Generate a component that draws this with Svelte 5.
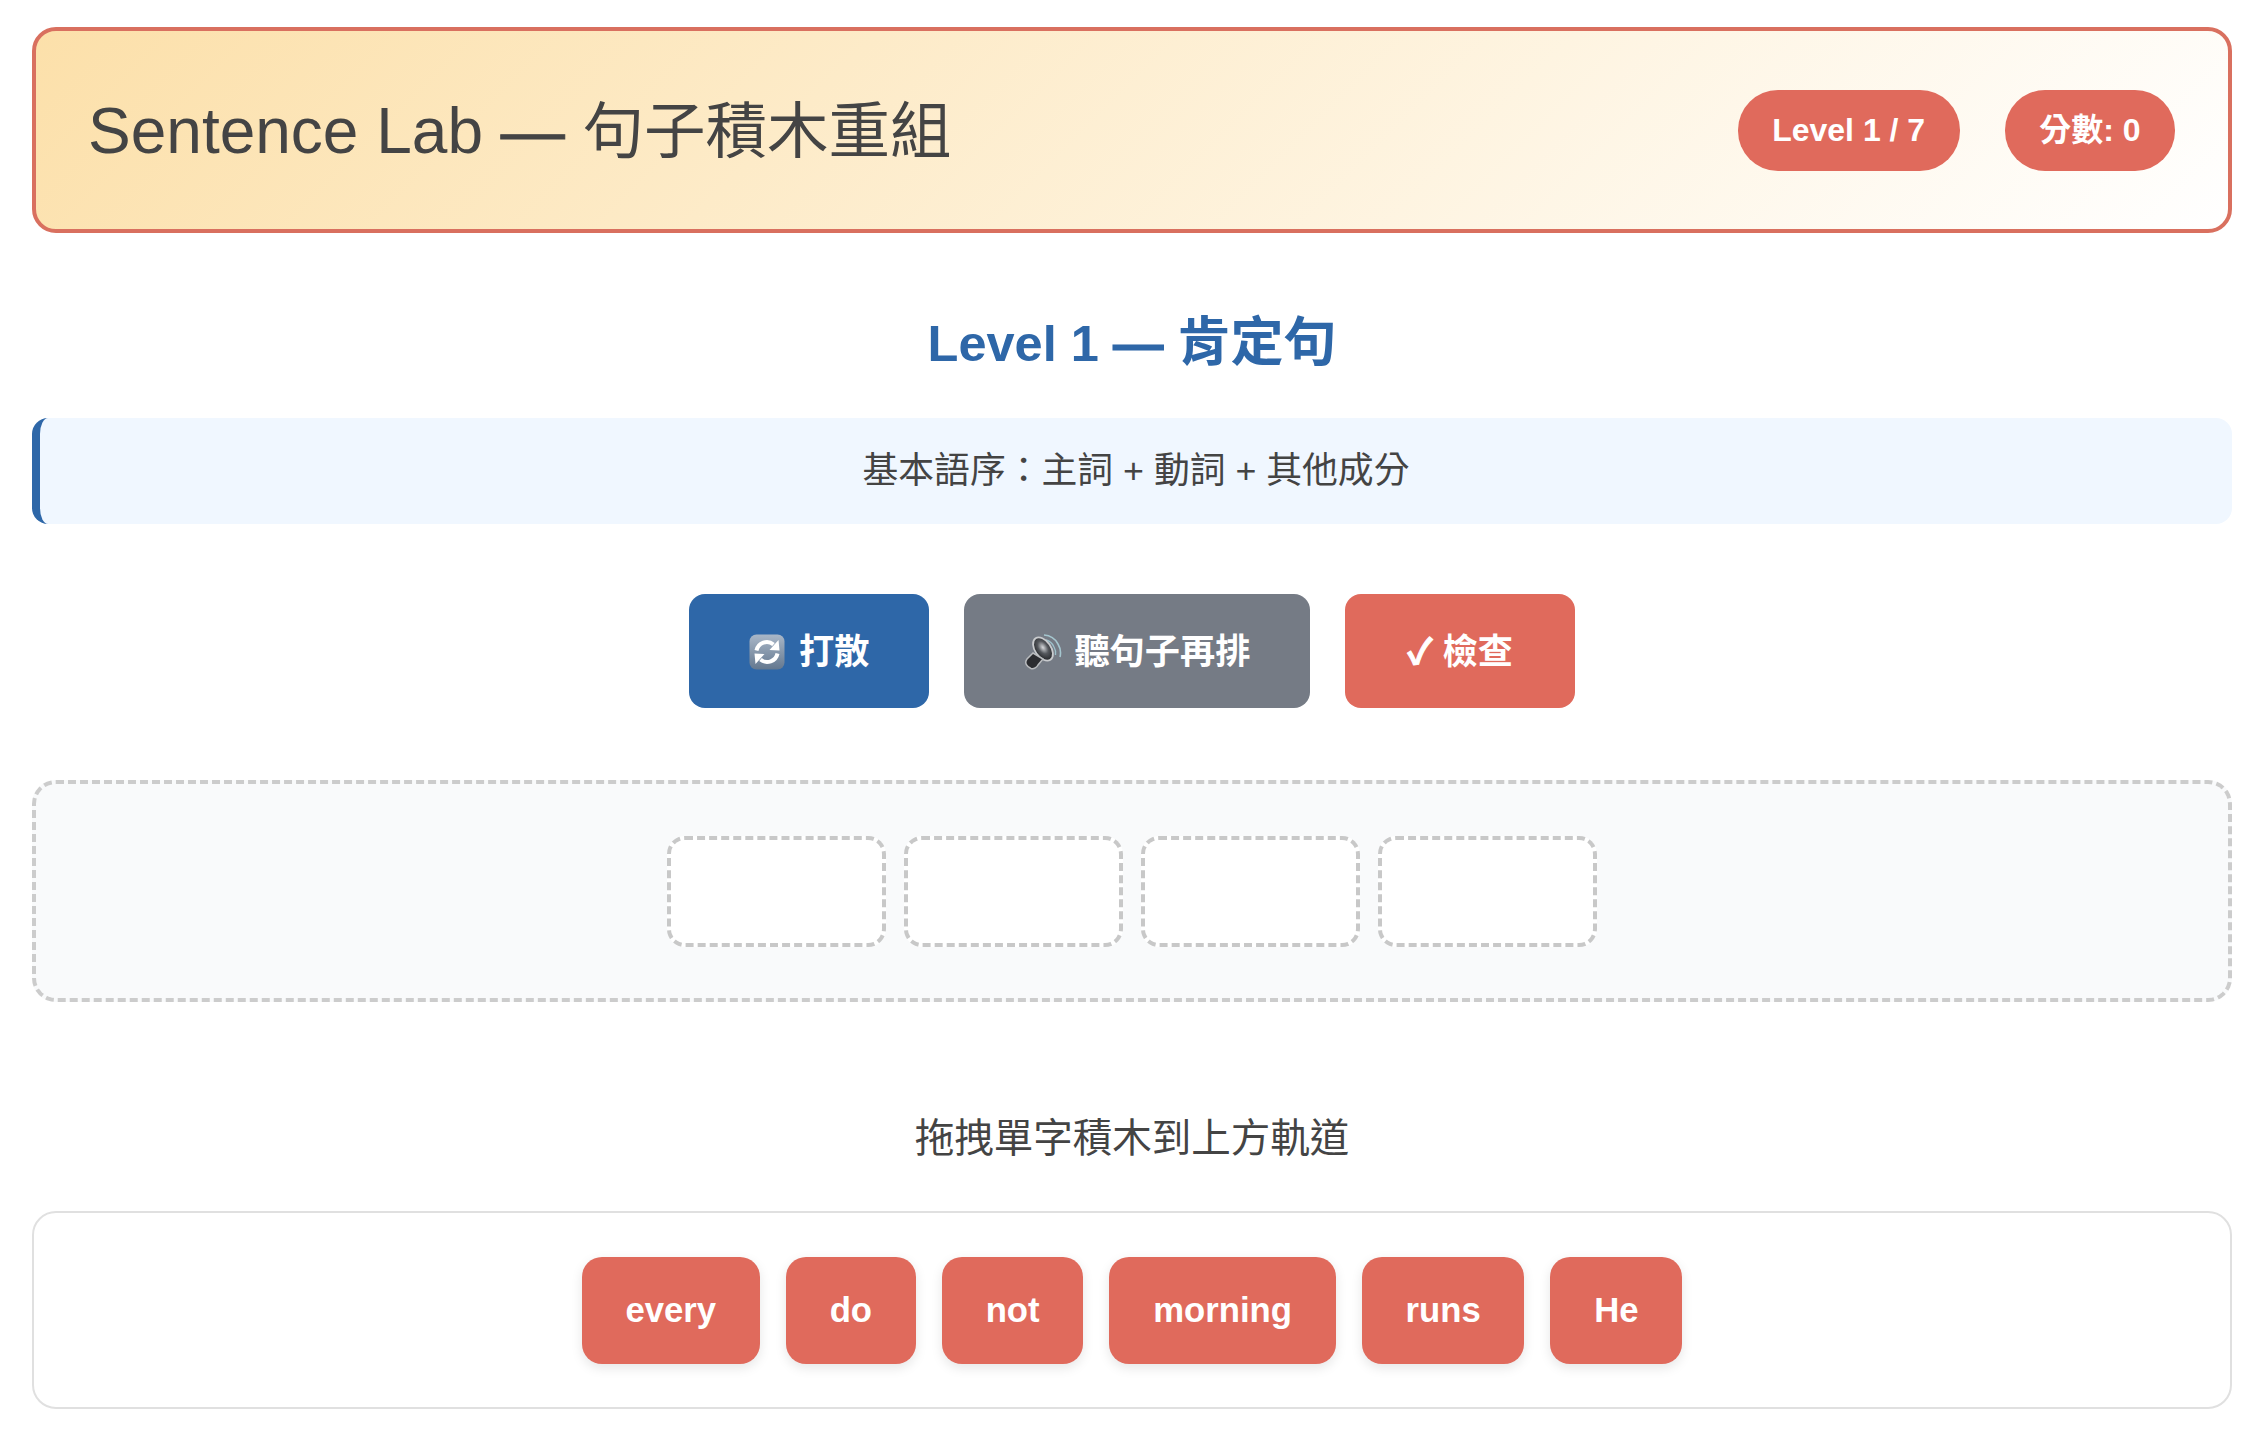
<script lang="ts">
  const slots = [0, 1, 2, 3];
  const tiles = ["every", "do", "not", "morning", "runs", "He"];
</script>

<div class="page">
  <header class="top">
    <h1>Sentence Lab <span class="dash">—</span> <span class="cjk">句子積木重組</span></h1>
    <div class="badges">
      <span class="badge">Level 1 / 7</span>
      <span class="badge">分數: 0</span>
    </div>
  </header>

  <h2>Level 1 <span class="dash">—</span> <span class="cjk">肯定句</span></h2>

  <div class="hint">基本語序：主詞 + 動詞 + 其他成分</div>

  <div class="controls">
    <button class="btn blue">
      <svg class="emoji sync" viewBox="0 0 36 36" aria-hidden="true">
        <defs>
          <linearGradient id="sync-bg" x1="0" y1="0" x2="0" y2="1">
            <stop offset="0" stop-color="#a9b7c8" />
            <stop offset="1" stop-color="#64788f" />
          </linearGradient>
        </defs>
        <rect x="0.5" y="0.5" width="35" height="35" rx="7" fill="url(#sync-bg)" />
        <path d="M7.500 16.500A10.500 10.500 0 0 1 24.500 10.500" fill="none" stroke="#fff" stroke-width="4" />
        <path d="M20.500 16L30.500 16.500L29.500 6Z" fill="#fff" />
        <path d="M28.500 19.500A10.500 10.500 0 0 1 11.500 25.500" fill="none" stroke="#fff" stroke-width="4" />
        <path d="M15.500 20L5.500 19.500L6.500 30Z" fill="#fff" />
      </svg>打散
    </button>
    <button class="btn gray">
      <svg class="emoji speaker" viewBox="0 0 38 36" aria-hidden="true">
        <defs>
          <radialGradient id="cone" cx="0.55" cy="0.45" r="0.6">
            <stop offset="0" stop-color="#d8dadd" />
            <stop offset="0.45" stop-color="#55585d" />
            <stop offset="1" stop-color="#1c1d20" />
          </radialGradient>
        </defs>
        <path d="M20 1a17 17 0 0 1 14 9a17 17 0 0 1 2 13" fill="none" stroke="#a5c6cf" stroke-width="1.600" />
        <path d="M22 6a12 12 0 0 1 8 7a12 12 0 0 1 1.500 8" fill="none" stroke="#9dc0ca" stroke-width="1.400" />
        <ellipse cx="19" cy="15" rx="8" ry="13" transform="rotate(-35 19 15)" fill="url(#cone)" stroke="#c9cbce" stroke-width="1.800" />
        <path d="M9 19L3 25C0 29 3 33 7 34.500C10 35.500 13 33 14 31L19 25Z" fill="#2b2c30" stroke="#b9bbbe" stroke-width="1.500" />
      </svg>聽句子再排
    </button>
    <button class="btn red"><span class="check">✓</span> 檢查</button>
  </div>

  <div class="track">
    {#each slots as slot (slot)}
      <div class="slot"></div>
    {/each}
  </div>

  <p class="prompt">拖拽單字積木到上方軌道</p>

  <div class="pool">
    {#each tiles as word (word)}
      <div class="tile">{word}</div>
    {/each}
  </div>
</div>

<style>
  :global(body) {
    margin: 0;
    background: #fff;
  }
  .page {
    padding: 27px 34px 32px 32px;
    font-family: "Liberation Sans", "Noto Sans CJK TC", sans-serif;
    color: #444;
  }
  .cjk {
    font-family: "Noto Sans CJK TC", sans-serif;
  }
  .dash {
    -webkit-text-stroke: 1px currentColor;
  }
  .top {
    display: flex;
    justify-content: space-between;
    align-items: center;
    height: 206px;
    box-sizing: border-box;
    padding: 0 53px 0 52px;
    border: 4px solid #d9705f;
    border-radius: 24px;
    background: linear-gradient(135deg, #fce0aa 0%, #fff 100%);
  }
  h1 {
    margin: 0 0 8px;
    font-size: 64px;
    font-weight: 400;
    color: #444;
  }
  h1 .cjk {
    font-size: 61.5px;
  }
  .badges {
    display: flex;
    gap: 45px;
  }
  .badge {
    padding: 0 34.5px;
    height: 81px;
    line-height: 81px;
    border-radius: 40px;
    background: #e06a5c;
    color: #fff;
    font-size: 32px;
    font-weight: 700;
  }
  h2 {
    margin: 72px 0 0;
    height: 66px;
    text-align: center;
    font-size: 50.5px;
    line-height: 66px;
    font-weight: 700;
    color: #2e67a8;
  }
  h2 .cjk {
    font-size: 53px;
  }
  .hint {
    margin-top: 47px;
    height: 106px;
    line-height: 106px;
    box-sizing: border-box;
    border-left: 8px solid #2e67a8;
    border-radius: 16px;
    background: #f0f7ff;
    text-align: center;
    font-size: 35.8px;
  }
  .controls {
    display: flex;
    justify-content: center;
    gap: 35px;
    margin-top: 70px;
  }
  .btn {
    height: 114px;
    padding: 0 60px 5px;
    border: 0;
    border-radius: 16px;
    color: #fff;
    font-family: inherit;
    font-size: 35.2px;
    font-weight: 700;
  }
  .blue {
    background: #2e67a8;
  }
  .gray {
    background: #757b85;
  }
  .red {
    padding: 0 62px 5px;
    background: #e06a5c;
  }
  .check {
    -webkit-text-stroke: 1px #fff;
  }
  .emoji {
    vertical-align: -6px;
  }
  .sync {
    width: 36px;
    height: 36px;
    margin-right: 14px;
  }
  .speaker {
    width: 38px;
    height: 36px;
    margin-right: 12px;
  }
  .track {
    display: flex;
    justify-content: center;
    align-items: center;
    gap: 17.5px;
    height: 222px;
    margin-top: 72px;
    box-sizing: border-box;
    border: 4px dashed #ccc;
    border-radius: 24px;
    background: #f9fafb;
  }
  .slot {
    width: 219.5px;
    height: 111px;
    box-sizing: border-box;
    border: 4px dashed #c8c8c8;
    border-radius: 18px;
    background: #fff;
  }
  .prompt {
    margin: 108px 0 0;
    text-align: center;
    font-size: 39.5px;
    line-height: 56px;
  }
  .pool {
    display: flex;
    justify-content: center;
    align-items: center;
    gap: 26px;
    height: 198px;
    margin-top: 45px;
    box-sizing: border-box;
    border: 2px solid #e0e0e0;
    border-radius: 24px;
  }
  .tile {
    height: 107px;
    line-height: 107px;
    padding: 0 43.8px;
    border-radius: 20px;
    background: #e06a5c;
    color: #fff;
    font-size: 34.7px;
    font-weight: 700;
    box-shadow: 0 4px 12px rgba(0, 0, 0, 0.1);
  }
</style>
